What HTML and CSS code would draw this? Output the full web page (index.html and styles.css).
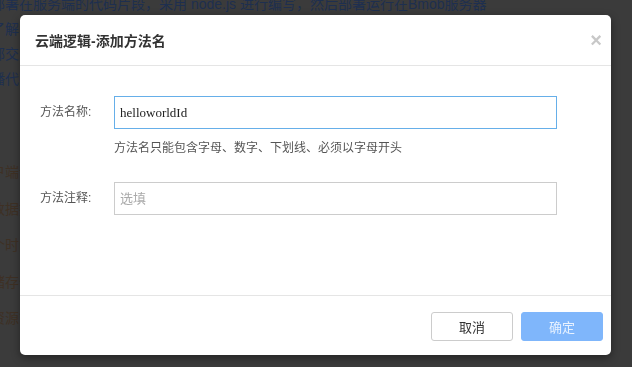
FILE: index.html
```html
<!DOCTYPE html>
<html lang="zh-CN">
<head>
    <meta charset="UTF-8">
    <title>云端逻辑-添加方法名</title>
    <link rel="stylesheet" href="styles.css">
</head>
<body>
    <div class="page">
        <p class="link">部署在服务端的代码片段，采用 node.js 进行编写，然后部署运行在Bmob服务器</p>
        <p class="link">了解云端代码的使用方法</p>
        <p class="link">部交互接口</p>
        <p class="link">播代码示例</p>
        <p class="note spaced">户端调用</p>
        <p class="note">数据操作</p>
        <p class="note">个时间点</p>
        <p class="note">储存位置</p>
        <p class="note">资源管理</p>
    </div>

    <div class="backdrop">
        <div class="modal">
            <div class="modal-header">
                <h4>云端逻辑-添加方法名</h4>
                <span class="close">×</span>
            </div>

            <div class="modal-body">
                <div class="form-row">
                    <label>方法名称:</label>
                    <div class="field">
                        <input type="text" class="input focus" value="helloworldId">
                        <p class="help">方法名只能包含字母、数字、下划线、必须以字母开头</p>
                    </div>
                </div>
                <div class="form-row">
                    <label>方法注释:</label>
                    <div class="field">
                        <input type="text" class="input" placeholder="选填">
                    </div>
                </div>
            </div>

            <div class="modal-footer">
                <button class="btn btn-default">取消</button>
                <button class="btn btn-primary">确定</button>
            </div>
        </div>
    </div>
</body>
</html>
```

FILE: styles.css
```css
* {
    margin: 0;
    padding: 0;
    box-sizing: border-box;
}

body {
    font-family: "Liberation Sans", "Noto Sans CJK SC", sans-serif;
    background: #3b3b3b;
    overflow: hidden;
    height: 367px;
}

/* dimmed page behind the dialog */
.page {
    margin: -8px 0 0 -9px;
    font-size: 14px;
    white-space: nowrap;
}

.page p {
    line-height: 25px;
    height: 25px;
}

.page .link {
    color: #1e2f4f;
}

.page .note {
    color: #3e3024;
    height: 36.5px;
    line-height: 36.5px;
}

.page .spaced {
    margin-top: 62px;
}

.backdrop {
    position: fixed;
    top: 0;
    left: 0;
    right: 0;
    bottom: 0;
    padding: 15px 21px 0 20px;
}

.modal {
    background: #fff;
    border-radius: 5px;
    height: 340px;
    display: flex;
    flex-direction: column;
    box-shadow: 0 3px 9px rgba(0,0,0,0.4);
}

.modal-header {
    display: flex;
    justify-content: space-between;
    align-items: center;
    height: 51px;
    padding: 0 10px 0 15px;
    border-bottom: 1px solid #e5e5e5;
}

.modal-header h4 {
    font-size: 14px;
    font-weight: bold;
    color: #333;
}

.close {
    font-size: 20px;
    font-weight: bold;
    color: #c8c8c8;
    line-height: 1;
    margin: -1px -1px 0 0;
}

.modal-body {
    flex: 1;
    padding: 30px 54px 0 20px;
}

.form-row {
    display: flex;
    margin-bottom: 25px;
}

.form-row label {
    width: 74px;
    font-size: 12px;
    color: #555;
    line-height: 33px;
}

.field {
    flex: 1;
}

.input {
    display: block;
    width: 100%;
    height: 33px;
    border: 1px solid #ccc;
    padding: 0 5px;
    font-family: "Liberation Serif", serif;
    font-size: 13px;
    color: #222;
    outline: none;
}

.input.focus {
    border-color: #66afe9;
}

.input::placeholder {
    font-family: "Liberation Sans", "Noto Sans CJK SC", sans-serif;
    color: #aaa;
}

.help {
    font-size: 12px;
    color: #555;
    margin-top: 10px;
    line-height: 18px;
}

.modal-footer {
    display: flex;
    justify-content: flex-end;
    gap: 8px;
    height: 60px;
    padding: 16px 8px 0 0;
    border-top: 1px solid #e5e5e5;
}

.btn {
    width: 82px;
    height: 29px;
    border-radius: 3px;
    font-family: "Liberation Sans", "Noto Sans CJK SC", sans-serif;
    font-size: 13px;
    cursor: pointer;
}

.btn-default {
    background: #fff;
    border: 1px solid #ccc;
    color: #333;
}

.btn-primary {
    background: #7fb6fb;
    border: 1px solid #7fb6fb;
    color: #e8f2ff;
}
```
